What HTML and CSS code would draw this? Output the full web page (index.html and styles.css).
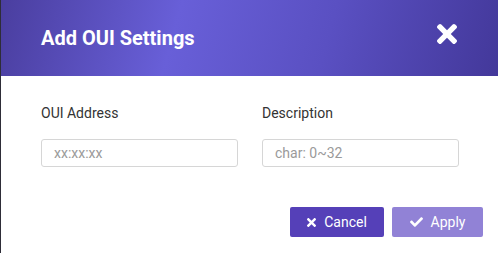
FILE: index.html
```html
<!DOCTYPE html>
<html>
<head>
<meta charset="utf-8">
<link rel="stylesheet" href="styles.css">
</head>
<body>
<div class="modal">
  <div class="modal-header">
    <h2 class="modal-title">Add OUI Settings</h2>
    <button class="close-btn" aria-label="Close">
      <svg width="20" height="20" viewBox="0 80 352 352"><path fill="#fff" d="M242.72 256l100.07-100.07c12.28-12.28 12.28-32.19 0-44.48l-22.24-22.24c-12.28-12.28-32.19-12.28-44.48 0L176 189.28 75.93 89.21c-12.28-12.28-32.19-12.28-44.48 0L9.21 111.45c-12.28 12.28-12.28 32.19 0 44.48L109.28 256 9.21 356.07c-12.28 12.28-12.28 32.19 0 44.48l22.24 22.24c12.28 12.28 32.2 12.28 44.48 0L176 322.72l100.07 100.07c12.28 12.28 32.2 12.28 44.48 0l22.24-22.24c12.28-12.28 12.28-32.19 0-44.48L242.72 256z"/></svg>
    </button>
  </div>
  <div class="modal-body">
    <div class="field-row">
      <div class="field">
        <label class="field-label">OUI Address</label>
        <input class="field-input" type="text" placeholder="xx:xx:xx">
      </div>
      <div class="field">
        <label class="field-label">Description</label>
        <input class="field-input" type="text" placeholder="char: 0~32">
      </div>
    </div>
  </div>
  <div class="modal-footer">
    <button class="btn btn-cancel">
      <svg width="9" height="9" viewBox="0 80 352 352"><path fill="#fff" d="M242.72 256l100.07-100.07c12.28-12.28 12.28-32.19 0-44.48l-22.24-22.24c-12.28-12.28-32.19-12.28-44.48 0L176 189.28 75.93 89.21c-12.28-12.28-32.19-12.28-44.48 0L9.21 111.45c-12.28 12.28-12.28 32.19 0 44.48L109.28 256 9.21 356.07c-12.28 12.28-12.28 32.19 0 44.48l22.24 22.24c12.28 12.28 32.2 12.28 44.48 0L176 322.72l100.07 100.07c12.28 12.28 32.2 12.28 44.48 0l22.24-22.24c12.28-12.28 12.28-32.19 0-44.48L242.72 256z"/></svg>
      <span>Cancel</span>
    </button>
    <button class="btn btn-apply">
      <svg width="13" height="10" viewBox="0 65 512 382"><path fill="#fff" d="M173.898 439.404l-166.4-166.4c-9.997-9.997-9.997-26.206 0-36.204l36.203-36.204c9.997-9.998 26.207-9.998 36.204 0L192 312.69 432.095 72.596c9.997-9.997 26.207-9.997 36.204 0l36.203 36.204c9.997 9.997 9.997 26.206 0 36.204l-294.4 294.401c-9.998 9.997-26.207 9.997-36.204-.001z"/></svg>
      <span>Apply</span>
    </button>
  </div>
</div>
</body>
</html>
```
FILE: styles.css
```css
html, body {
  margin: 0;
  padding: 0;
  height: 100%;
}
body {
  background: #2e2d38;
  font-family: Roboto, "Liberation Sans", Arial, sans-serif;
  display: flex;
  overflow: hidden;
}
.modal {
  flex: 1;
  margin-left: 1px;
  background: #fff;
  display: flex;
  flex-direction: column;
}
.modal-header {
  height: 76px;
  box-sizing: border-box;
  padding: 0 42px 0 40px;
  display: flex;
  align-items: center;
  justify-content: space-between;
  background: linear-gradient(105deg, #4a3e9f 0%, #685fd8 35%, #5a50c2 65%, #43389a 100%);
}
.modal-title {
  margin: 0;
  color: #fff;
  font-size: 20px;
  font-weight: 700;
  line-height: 24px;
}
.close-btn {
  background: none;
  border: 0;
  padding: 0;
  margin-bottom: 9px;
  display: flex;
  cursor: pointer;
}
.modal-body {
  padding: 27px 40px 0 40px;
}
.field-row {
  display: flex;
  gap: 24px;
}
.field {
  display: flex;
  flex-direction: column;
  gap: 16px;
}
.field-label {
  font-size: 14px;
  line-height: 20px;
  color: #333;
}
.field-input {
  width: 197px;
  height: 28px;
  box-sizing: border-box;
  border: 1px solid #d6d6d6;
  border-radius: 3px;
  padding: 0 12px;
  font-family: Roboto, "Liberation Sans", Arial, sans-serif;
  font-size: 14px;
  color: #333;
  outline: none;
}
.field-input::placeholder {
  color: #9a9a9a;
}
.modal-footer {
  display: flex;
  justify-content: flex-end;
  gap: 8px;
  padding: 40px 16px 0 0;
}
.btn {
  height: 30px;
  border: 0;
  border-radius: 2px;
  color: #fff;
  font-family: Roboto, "Liberation Sans", Arial, sans-serif;
  font-size: 14px;
  display: flex;
  align-items: center;
  justify-content: center;
  gap: 8px;
  padding: 0;
}
.btn-cancel {
  width: 94px;
  background: #5540b8;
}
.btn-apply {
  width: 91px;
  background: #9182d6;
}
```
